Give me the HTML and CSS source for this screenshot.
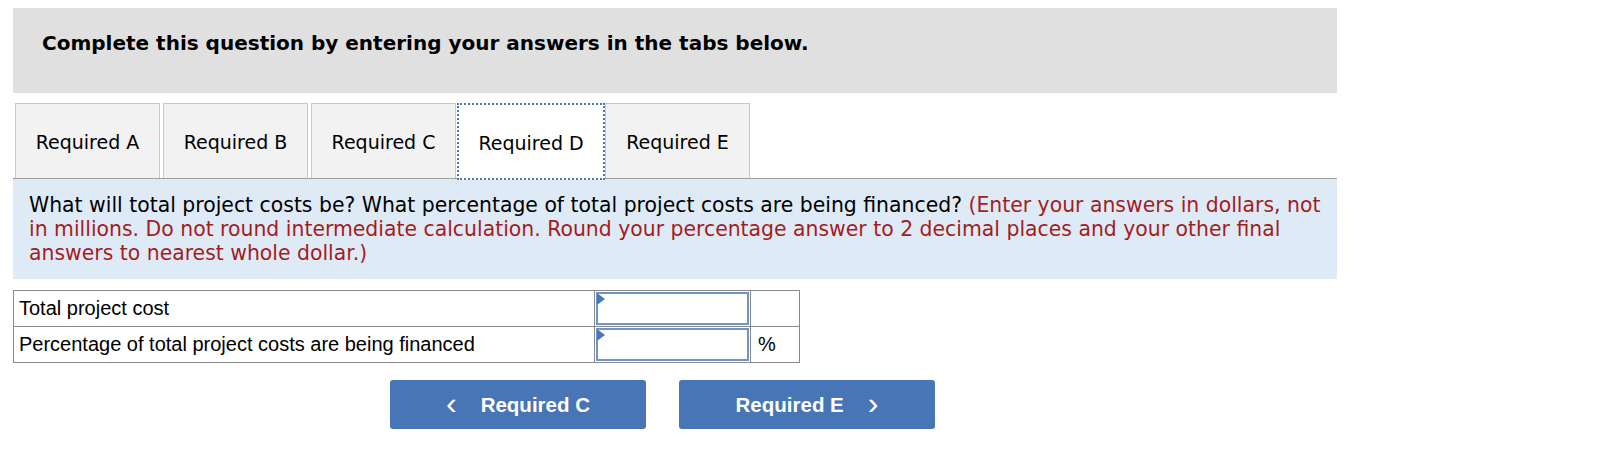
FILE: index.html
```html
<!DOCTYPE html>
<html>
<head>
<meta charset="utf-8">
<link rel="stylesheet" href="styles.css">
</head>
<body>
<div class="page">
  <div class="header">Complete this question by entering your answers in the tabs below.</div>
  <div class="tabs">
    <div class="tab">Required A</div>
    <div class="tab">Required B</div>
    <div class="tab">Required C</div>
    <div class="tab active">Required D</div>
    <div class="tab">Required E</div>
  </div>
  <div class="question">What will total project costs be? What percentage of total project costs are being financed? <span class="note">(Enter your answers in dollars, not in millions. Do not round intermediate calculation. Round your percentage answer to 2 decimal places and your other final answers to nearest whole dollar.)</span></div>
  <table class="answers">
    <tr>
      <td class="label">Total project cost</td>
      <td class="inp"><div class="box"><span class="flag"></span></div></td>
      <td class="unit"></td>
    </tr>
    <tr>
      <td class="label">Percentage of total project costs are being financed</td>
      <td class="inp"><div class="box"><span class="flag"></span></div></td>
      <td class="unit">%</td>
    </tr>
  </table>
  <div class="nav">
    <div class="btn"><span class="chev">&lsaquo;</span><span>Required C</span></div>
    <div class="btn"><span>Required E</span><span class="chev">&rsaquo;</span></div>
  </div>
</div>
</body>
</html>
```
FILE: styles.css
```css
html, body {
  margin: 0;
  padding: 0;
  background: #ffffff;
}
.page {
  padding-left: 13px;
  width: 1324px;
  font-family: "DejaVu Sans", Verdana, sans-serif;
  color: #000;
}
.header {
  margin-top: 8px;
  height: 85px;
  box-sizing: border-box;
  background: #e0e0e0;
  padding: 24px 29px 0;
  font-weight: bold;
  font-size: 20px;
  line-height: 23px;
}
.tabs {
  margin-top: 10px;
  display: flex;
  gap: 3px;
  padding-left: 2px;
  border-bottom: 1px solid #a0a0a0;
  height: 76px;
  box-sizing: border-box;
  align-items: flex-end;
}
.tab {
  width: 145px;
  height: 75px;
  box-sizing: border-box;
  background: #f2f2f2;
  border: 1px solid #c8c8c8;
  border-bottom: none;
  display: flex;
  align-items: center;
  justify-content: center;
  font-size: 19px;
  padding-top: 2px;
}
.tab.active {
  width: 148px;
  background: #fff;
  border: 2px dotted #4a78b8;
  height: 77px;
  margin-bottom: -2px;
  margin-left: -2px;
  margin-right: -3px;
}
.question {
  background: #deebf7;
  height: 100px;
  box-sizing: border-box;
  padding: 14px 12px 0 16px;
  font-size: 20.4px;
  line-height: 24px;
}
.note {
  color: #a51c1c;
}
.answers {
  margin-top: 11px;
  border-collapse: collapse;
  font-family: "Liberation Sans", Arial, sans-serif;
  font-size: 20px;
}
.answers td {
  border: 1px solid #8a8a8a;
  height: 35px;
  padding: 0;
}
.label {
  width: 575px;
  padding-left: 5px !important;
}
.inp {
  width: 155px;
}
.box {
  position: relative;
  height: 33px;
  margin: 0 1px;
  box-sizing: border-box;
  border: 2px solid #6f95c8;
  background: #fff;
}
.flag {
  position: absolute;
  left: -1px;
  top: -1px;
  width: 0;
  height: 0;
  border-top: 6px solid transparent;
  border-bottom: 6px solid transparent;
  border-left: 8px solid #4a78b8;
}
.unit {
  width: 49px;
  padding-left: 7px !important;
  box-sizing: border-box;
}
.nav {
  margin-top: 17px;
  display: flex;
  gap: 33px;
  padding-left: 377px;
}
.btn {
  width: 256px;
  height: 49px;
  background: #4775b5;
  border-radius: 3px;
  color: #fff;
  font-family: "Liberation Sans", Arial, sans-serif;
  font-weight: bold;
  font-size: 20.5px;
  display: flex;
  align-items: center;
  justify-content: center;
  gap: 24px;
}
.chev {
  font-weight: normal;
  font-size: 32px;
  line-height: 1;
  margin-top: -4px;
}
```
